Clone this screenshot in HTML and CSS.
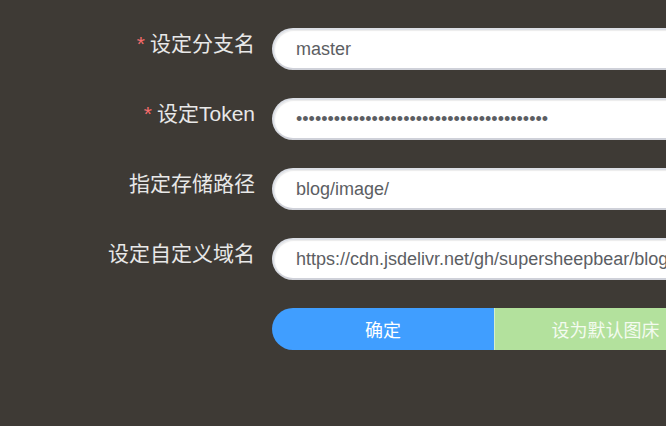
FILE: index.html
```html
<!DOCTYPE html>
<html lang="zh-CN">
<head>
<meta charset="utf-8">
<title>图床设置</title>
<link rel="stylesheet" href="styles.css">
</head>
<body>
<form class="form">
  <div class="row">
    <label class="label"><span class="req">*</span>设定分支名</label>
    <input class="field" type="text" value="master">
  </div>
  <div class="row">
    <label class="label"><span class="req">*</span>设定Token</label>
    <input class="field" type="password" value="0123456789012345678901234567890123456789">
  </div>
  <div class="row">
    <label class="label">指定存储路径</label>
    <input class="field" type="text" value="blog/image/">
  </div>
  <div class="row">
    <label class="label">设定自定义域名</label>
    <input class="field" type="text" value="https://cdn.jsdelivr.net/gh/supersheepbear/blog">
  </div>
  <div class="row">
    <div class="label"></div>
    <div class="btn-group">
      <button type="button" class="btn btn-primary">确定</button>
      <button type="button" class="btn btn-success" disabled>设为默认图床</button>
    </div>
  </div>
</form>
</body>
</html>
```
FILE: styles.css
```css
html, body {
  margin: 0;
  padding: 0;
  overflow: hidden;
  width: 666px;
  height: 426px;
  background: #3e3a35;
  font-family: "Liberation Sans", "Noto Sans CJK SC", sans-serif;
}

.form {
  display: flex;
  flex-direction: column;
  gap: 28px;
  box-sizing: border-box;
  padding-top: 28px;
  width: 666px;
  height: 426px;
  overflow: hidden;
}

.row {
  display: flex;
  align-items: flex-start;
  height: 42px;
  flex: 0 0 42px;
}

.label {
  flex: 0 0 255px;
  width: 255px;
  margin-right: 17px;
  text-align: right;
  font-size: 21px;
  line-height: 32px;
  color: #e8e8e8;
  white-space: nowrap;
}

.req {
  color: #f56c6c;
  margin-right: 5px;
}

.field {
  flex: 0 0 460px;
  box-sizing: border-box;
  width: 460px;
  height: 42px;
  margin: 0;
  padding: 0 22px;
  border: 2px solid #dcdfe6;
  border-bottom-color: #cfd1d9;
  border-radius: 21px;
  background: #fff;
  box-shadow: inset 1px 1px 1px rgba(0, 0, 0, 0.08);
  font-family: "Liberation Sans", "Noto Sans CJK SC", sans-serif;
  font-size: 18px;
  color: #5c5e63;
  outline: none;
}

.btn-group {
  display: flex;
  flex: 0 0 444px;
}

.btn {
  box-sizing: border-box;
  width: 222px;
  height: 42px;
  margin: 0;
  padding: 0;
  border: none;
  font-family: "Liberation Sans", "Noto Sans CJK SC", sans-serif;
  font-size: 18px;
  color: #fff;
}

.btn-primary {
  background: #409eff;
  border-radius: 21px 0 0 21px;
}

.btn-success {
  background: #b3e19d;
  border-left: 1px solid #d6efca;
  border-radius: 0 21px 21px 0;
  color: #f4fbf0;
}
```
